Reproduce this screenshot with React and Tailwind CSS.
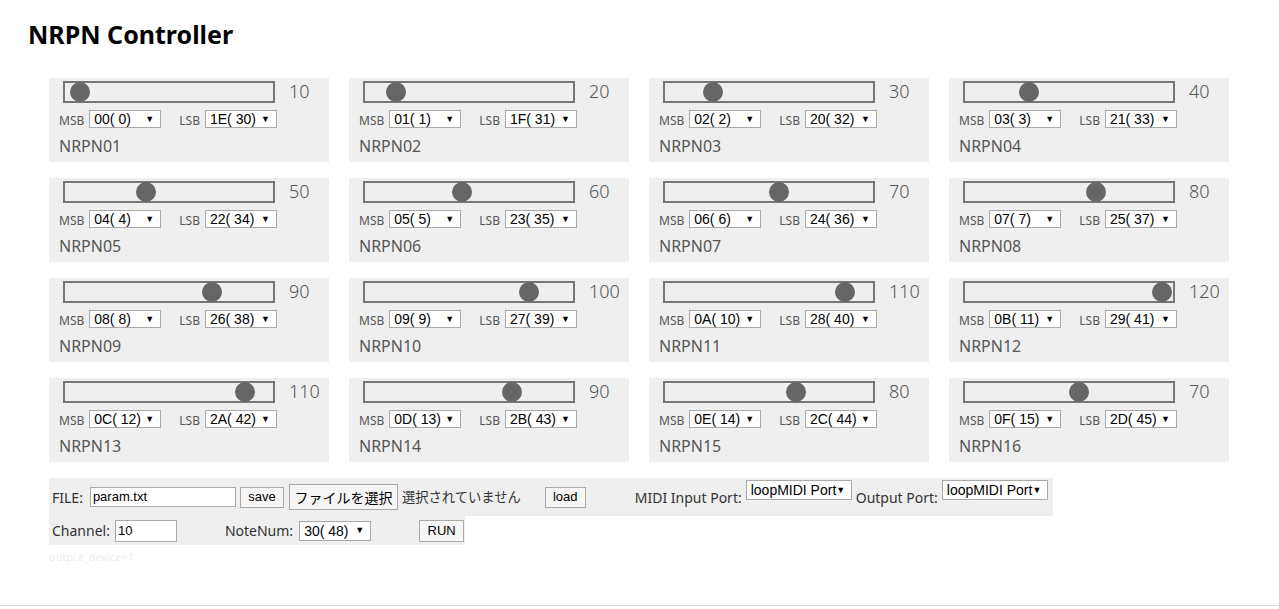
import React from "react";

const values = [10, 20, 30, 40, 50, 60, 70, 80, 90, 100, 110, 120, 110, 90, 80, 70];

const hex = (n) => n.toString(16).toUpperCase().padStart(2, "0");
const optLabel = (n) => `${hex(n)}( ${n})`;

function FakeSelect({ label, width, className = "" }) {
  return (
    <div
      className={`flex items-center justify-between h-[18px] border border-[#a9a9a9] bg-white pl-[4px] pr-[6px] text-[14px] leading-none text-black whitespace-pre font-['Liberation_Sans',sans-serif] ${width} ${className}`}
    >
      <span>{label}</span>
      <span className="text-[9px]">▼</span>
    </div>
  );
}

function Slider({ value }) {
  const left = (value * 212) / 128 - 12;
  return (
    <div className="relative ml-[4px] w-[212px] h-[22px] border-2 border-[#777777] bg-[#efefef]">
      <div
        className="absolute top-[-1px] w-[20px] h-[20px] rounded-full bg-[#666666]"
        style={{ left: `${left}px` }}
      />
    </div>
  );
}

function Card({ index, value }) {
  const num = String(index + 1).padStart(2, "0");
  return (
    <div className="flex flex-col h-[84px] bg-[#efefef] pl-[10px] pt-[3px] text-[#555555]">
      <div className="flex items-start h-[22px]">
        <Slider value={value} />
        <span className="ml-[14px] text-[18px] leading-[20px] font-light">{value}</span>
      </div>
      <div className="flex items-end mt-[7px]">
        <span className="text-[12px] leading-none mr-[5px] mb-[1px]">MSB</span>
        <FakeSelect label={optLabel(index)} width="w-[72px]" />
        <span className="ml-[18px] text-[12px] leading-none mr-[5px] mb-[1px]">LSB</span>
        <FakeSelect label={optLabel(index + 30)} width="w-[72px]" />
      </div>
      <div className="mt-[8px] text-[16px] leading-[20px]">NRPN{num}</div>
    </div>
  );
}

function Btn({ children, className = "" }) {
  return (
    <div
      className={`flex items-center justify-center border border-[#a9a9a9] bg-[#f6f6f6] text-[13px] text-black font-['Liberation_Sans',sans-serif] ${className}`}
    >
      {children}
    </div>
  );
}

export default function App() {
  return (
    <div className="min-h-[609px] w-full bg-white font-['Noto_Sans','Noto_Sans_CJK_JP',sans-serif] flex flex-col">
      <h1 className="pl-[28px] pt-[17px] text-[25px] leading-[34px] font-bold text-black">
        NRPN Controller
      </h1>

      <div className="ml-[49px] mt-[27px] grid grid-cols-[repeat(4,280px)] gap-x-[20px] gap-y-[16px]">
        {values.map((v, i) => (
          <Card key={i} index={i} value={v} />
        ))}
      </div>

      <div className="ml-[49px] mt-[16px] flex flex-col items-start text-[14px] text-[#333333]">
        <div className="flex items-start w-[1004px] h-[38px] bg-[#efefef] pl-[3px]">
          <div className="flex items-center h-[38px]">
            <span>FILE:</span>
            <div className="ml-[7px] w-[146px] h-[20px] border border-[#a9a9a9] bg-white pl-[2px] text-[13px] leading-[18px] text-black font-['Liberation_Sans',sans-serif]">
              param.txt
            </div>
            <Btn className="ml-[4px] w-[44px] h-[21px]">save</Btn>
            <Btn className="ml-[5px] w-[109px] h-[26px] text-[14px] font-['Noto_Sans_CJK_JP',sans-serif]">
              ファイルを選択
            </Btn>
            <span className="ml-[4px] text-[13.3px] font-['Noto_Sans_CJK_JP',sans-serif]">選択されていません</span>
            <Btn className="ml-[24px] w-[41px] h-[21px]">load</Btn>
            <span className="ml-[49px]">MIDI Input Port:</span>
          </div>
          <FakeSelect label="loopMIDI Port" width="w-[106px]" className="ml-[4px] mt-[2px] h-[20px]" />
          <div className="flex items-center h-[38px] ml-[4px]">
            <span>Output Port:</span>
          </div>
          <FakeSelect label="loopMIDI Port" width="w-[106px]" className="ml-[4px] mt-[2px] h-[20px]" />
        </div>

        <div className="flex items-center w-[416px] h-[29px] bg-[#efefef] pl-[3px]">
          <span>Channel:</span>
          <div className="ml-[5px] w-[62px] h-[22px] border border-[#a9a9a9] bg-white pl-[2px] text-[13px] leading-[20px] text-black font-['Liberation_Sans',sans-serif]">
            10
          </div>
          <span className="ml-[48px]">NoteNum:</span>
          <FakeSelect label="30( 48)" width="w-[72px]" className="ml-[6px] h-[20px]" />
          <Btn className="ml-[48px] w-[45px] h-[22px]">RUN</Btn>
        </div>

        <div className="mt-[4px] text-[11px] leading-[16px] text-[#eeeeee]">output_device=1</div>
      </div>

      <div className="mt-auto mb-[3px] h-[1px] w-full bg-[#dddddd]" />
    </div>
  );
}
